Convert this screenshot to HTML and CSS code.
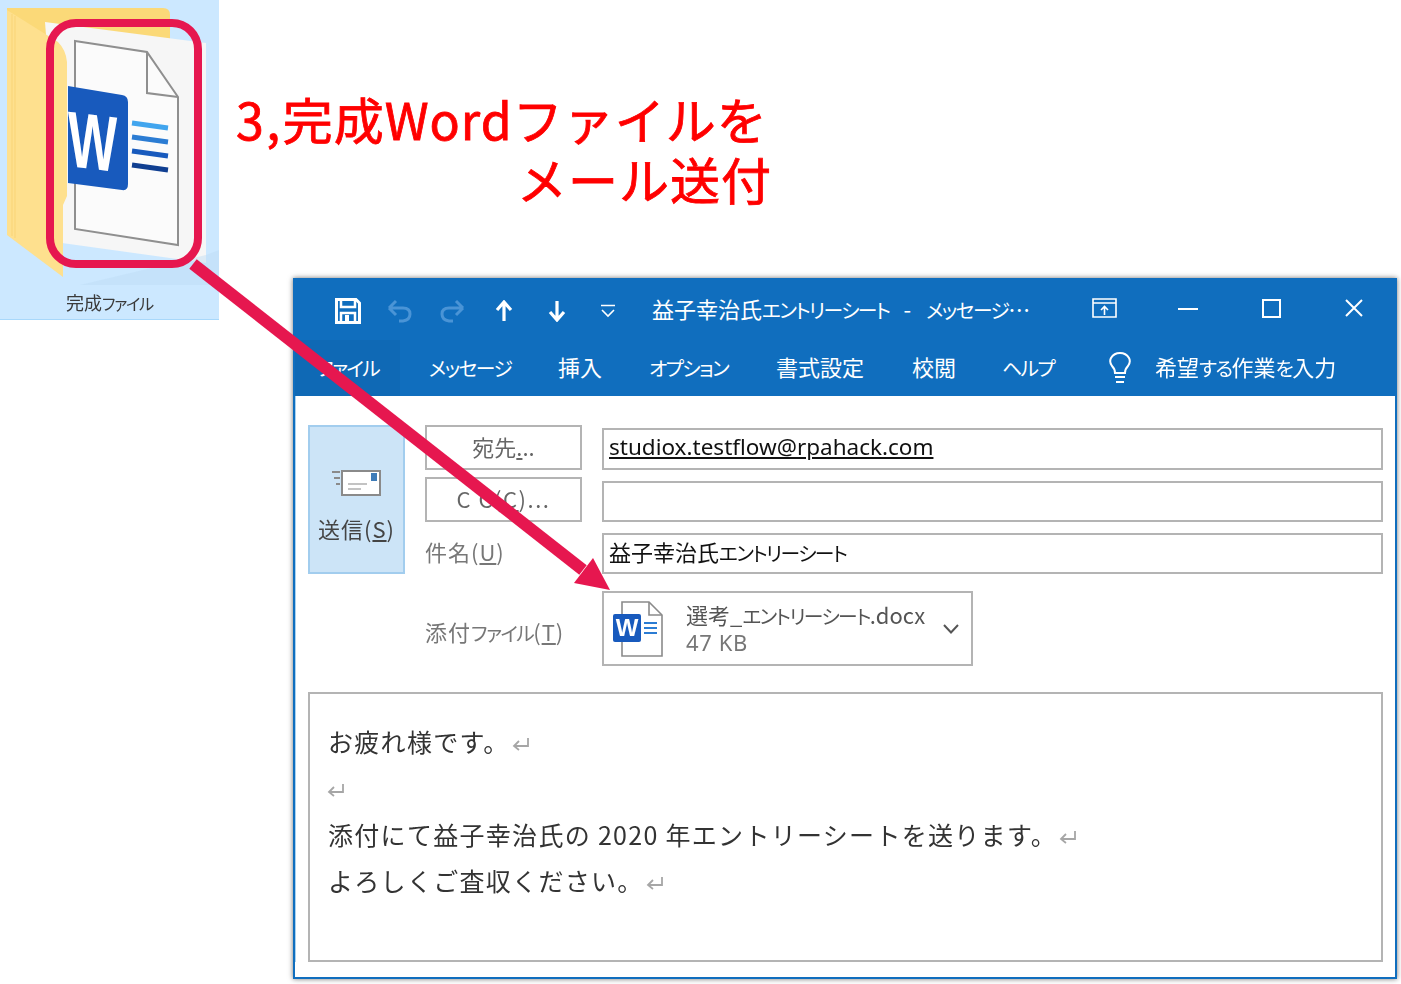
FILE: index.html
```html
<!DOCTYPE html>
<html lang="ja">
<head>
<meta charset="utf-8">
<title>完成Wordファイルをメール送付</title>
<link rel="stylesheet" href="styles.css">
</head>
<body>
<div class="page">
  <section class="tile">
    <svg class="folder" width="219" height="286" viewBox="0 0 219 286">
      <path d="M7 8H163q7 0 7 7V120H7z" fill="#fbd978"/>
      <path d="M45 22L206 43V263L62 243z" fill="#f6f6f6"/>
      <path d="M206 255L219 250V285H80z" fill="#bcdcf4" opacity=".45"/>
      <path d="M7 10L58 42Q66 50 67 62V196L63 205V277L7 235z" fill="#fee08e"/>
      <path d="M12 14V236M15 16V238" stroke="#f9d477" stroke-width="1" fill="none"/>
      <path d="M75 41L147 52L178 97V245L75 229z" fill="#fbfbfb" stroke="#8f8f8f" stroke-width="2"/>
      <path d="M147 52V93L178 97" fill="none" stroke="#8f8f8f" stroke-width="2"/>
      <path d="M68 86L122 95Q128 96 128 102V184Q128 191 122 190L68 183z" fill="#185abd"/>
      <text class="word-w" transform="translate(68 166) skewY(7) scale(.66 1)">W</text>
      <path d="M132 123L168 128" stroke="#41a5ee" stroke-width="5"/>
      <path d="M132 137L168 142" stroke="#2b7cd3" stroke-width="5"/>
      <path d="M132 151L168 156" stroke="#185abd" stroke-width="5"/>
      <path d="M132 165L168 170" stroke="#103f91" stroke-width="5"/>
    </svg>
    <div class="tile-label">完成<span class="k">ファイル</span></div>
  </section>

  <h1 class="headline"><span class="headline-num">3,</span>完成Wordファイルを<span class="headline-second">メール送付</span></h1>

  <main class="window">
    <header class="chrome">
      <div class="titlebar">
        <div class="qat">
          <svg class="ico save" width="26" height="26" viewBox="0 0 26 26"><path d="M1.500 1.500H21L24.500 5V24.500H1.500z" fill="none" stroke="#fff" stroke-width="3"/><path d="M6 2V9H20V2" fill="none" stroke="#fff" stroke-width="2.500"/><path d="M6 24V15H20V24" fill="none" stroke="#fff" stroke-width="2.500"/><rect x="10" y="17" width="4" height="6" fill="#fff"/></svg>
          <svg class="ico undo" width="26" height="24" viewBox="0 0 26 24"><path d="M3 9H17Q24 9 24 15T17 22H13M3 9L10 2M3 9L10 16" fill="none" stroke="#4a94d6" stroke-width="3"/></svg>
          <svg class="ico redo" width="26" height="24" viewBox="0 0 26 24"><path d="M23 9H9Q2 9 2 15T9 22H13M23 9L16 2M23 9L16 16" fill="none" stroke="#4a94d6" stroke-width="3"/></svg>
          <svg class="ico up" width="18" height="22" viewBox="0 0 18 22"><path d="M9 21V3M2 10L9 2L16 10" fill="none" stroke="#fff" stroke-width="3.200"/></svg>
          <svg class="ico down" width="18" height="22" viewBox="0 0 18 22"><path d="M9 1V19M2 12L9 20L16 12" fill="none" stroke="#fff" stroke-width="3.200"/></svg>
          <svg class="ico more" width="16" height="14" viewBox="0 0 16 14"><path d="M1 1.500H15M2 6L8 12L14 6" fill="none" stroke="#fff" stroke-width="1.600"/></svg>
        </div>
        <div class="doc-title">益子幸治氏<span class="k">エントリーシート</span><span class="dash">-</span><span class="k">メッセージ</span>…</div>
        <div class="winctl">
          <svg class="ctl-restore" width="25" height="20" viewBox="0 0 25 20"><path d="M1 1H24V19H1zM1 5H24" fill="none" stroke="#fff" stroke-width="1.600"/><path d="M12.500 17V9M9 12L12.500 8.500L16 12" fill="none" stroke="#fff" stroke-width="1.600"/></svg>
          <svg class="ctl-min" width="20" height="20" viewBox="0 0 20 20"><path d="M0 11H20" stroke="#fff" stroke-width="2"/></svg>
          <svg class="ctl-max" width="19" height="19" viewBox="0 0 19 19"><rect x="1" y="1" width="17" height="17" fill="none" stroke="#fff" stroke-width="2"/></svg>
          <svg class="ctl-close" width="20" height="20" viewBox="0 0 20 20"><path d="M2 2L18 18M18 2L2 18" stroke="#fff" stroke-width="2"/></svg>
        </div>
      </div>
      <nav class="tabs">
        <span class="tab tab-file"><span class="k">ファイル</span></span>
        <span class="tab t-msg"><span class="k">メッセージ</span></span>
        <span class="tab t-ins">挿入</span>
        <span class="tab t-opt"><span class="k">オプション</span></span>
        <span class="tab t-fmt">書式設定</span>
        <span class="tab t-rev">校閲</span>
        <span class="tab t-help"><span class="k">ヘルプ</span></span>
        <svg class="bulb" width="24" height="32" viewBox="0 0 24 32"><path d="M7 21Q7 17 4 14Q1 10 3 6Q6 1 12 1T21 6Q23 10 20 14Q17 17 17 21z" fill="none" stroke="#fff" stroke-width="2"/><path d="M7 25H17M8 30H16" stroke="#fff" stroke-width="2"/></svg>
        <span class="tab t-tell">希望<span class="k">する</span>作業<span class="k">を</span>入力</span>
      </nav>
    </header>

    <div class="compose">
      <div class="send">
        <svg class="send-ico" width="50" height="28" viewBox="0 0 50 28"><path d="M11 2H49V26H11z" fill="#fff" stroke="#8a8a8a" stroke-width="2"/><rect x="40" y="4" width="6" height="8" fill="#3f7cb8"/><path d="M17 15H36M17 20H30" stroke="#b0b0b0" stroke-width="1.500"/><path d="M1 3H9M3 9H9M5 15H9" stroke="#8a8a8a" stroke-width="2"/></svg>
        <span class="send-text">送信(<u>S</u>)</span>
      </div>
      <button class="btn row1">宛先<u>.</u>..</button>
      <div class="field field1 link"><u>studiox.testflow@rpahack.com</u></div>
      <button class="btn row2">C C(<u>C</u>)...</button>
      <div class="field field2"></div>
      <div class="label row3">件名(<u>U</u>)</div>
      <div class="field field3">益子幸治氏<span class="k">エントリーシート</span></div>
      <div class="label row4">添付<span class="k">ファイル</span>(<u>T</u>)</div>
      <div class="attach">
        <svg class="attach-ico" width="50" height="56" viewBox="0 0 50 56"><path d="M9 1H36L49 14V55H9z" fill="#fff" stroke="#8a8a8a" stroke-width="1.600"/><path d="M36 1V14H49" fill="none" stroke="#8a8a8a" stroke-width="1.600"/><rect x="0" y="13" width="28" height="28" rx="2" fill="#185abd"/><text class="attach-w" x="14" y="35">W</text><path d="M31 22H44M31 27H44M31 32H44" stroke="#2b7cd3" stroke-width="2"/></svg>
        <div class="attach-text">
          <div class="attach-name">選考_<span class="k">エントリーシート</span>.docx</div>
          <div class="attach-size">47 KB</div>
        </div>
        <svg class="chev" width="16" height="10" viewBox="0 0 16 10"><path d="M1 1L8 8.500L15 1" fill="none" stroke="#555" stroke-width="2"/></svg>
      </div>
      <article class="body">
        <p>お疲れ様です。<svg class="ret" width="18" height="14" viewBox="0 0 18 14"><path d="M16 1V9H2M7 4L2 9L7 13" fill="none" stroke="#a6a6a6" stroke-width="1.800"/></svg></p>
        <p class="l2"><svg class="ret" width="18" height="14" viewBox="0 0 18 14"><path d="M16 1V9H2M7 4L2 9L7 13" fill="none" stroke="#a6a6a6" stroke-width="1.800"/></svg></p>
        <p>添付にて益子幸治氏の 2020 年エントリーシートを送ります。<svg class="ret" width="18" height="14" viewBox="0 0 18 14"><path d="M16 1V9H2M7 4L2 9L7 13" fill="none" stroke="#a6a6a6" stroke-width="1.800"/></svg></p>
        <p>よろしくご査収ください。<svg class="ret" width="18" height="14" viewBox="0 0 18 14"><path d="M16 1V9H2M7 4L2 9L7 13" fill="none" stroke="#a6a6a6" stroke-width="1.800"/></svg></p>
      </article>
    </div>
  </main>

  <svg class="overlay" width="1401" height="984" viewBox="0 0 1401 984">
    <rect x="50" y="23" width="148" height="241" rx="26" fill="none" stroke="#e6174f" stroke-width="8"/>
    <path d="M193 264L583 570" stroke="#e6174f" stroke-width="12" fill="none"/>
    <path d="M610 590L574 583L593 558z" fill="#e6174f"/>
  </svg>
</div>
</body>
</html>
```
FILE: styles.css
```css
* { box-sizing: border-box; }
html, body { margin: 0; padding: 0; background: #fff; }
body { font-family: "Noto Sans CJK JP", "Noto Sans", sans-serif; overflow: hidden; }

.page {
  position: relative;
  width: 1401px;
  height: 984px;
  overflow: hidden;
  display: grid;
  grid-template-columns: 219px 1fr;
  grid-template-rows: 278px 1fr;
}
.k { font-feature-settings: "palt"; font-size: .9em; letter-spacing: -.08em; }

/* Folder tile */
.tile {
  grid-row: 1 / 3;
  align-self: start;
  height: 320px;
  background: #cce8ff;
  border-bottom: 1px solid #a8d8fb;
  filter: blur(.5px);
}
.folder { display: block; }
.word-w { font-family: "Liberation Sans", sans-serif; font-weight: 700; font-size: 79px; fill: #fff; }
.tile-label { font-size: 18px; line-height: 24px; color: #3a3a3a; text-align: center; margin-top: 4px; }

/* Headline */
.headline {
  margin: 0;
  padding: 88px 0 0 17px;
  font-size: 50px;
  line-height: 60px;
  font-weight: 400;
  letter-spacing: 1px;
  color: #ff0000;
  white-space: nowrap;
  -webkit-text-stroke: .8px #ff0000;
}
.headline-num { letter-spacing: 2.500px; }
.headline-second { display: block; margin-left: 281px; }

/* Mail window */
.window {
  width: 1104px;
  height: 701px;
  margin-left: 74px;
  background: #fff;
  border: 2px solid #106ebe;
  box-shadow: 0 0 5px rgba(0,0,0,.55);
  filter: blur(.4px);
}
.chrome { height: 116px; background: #106ebe; color: #fff; }
.titlebar { height: 60px; display: flex; align-items: center; }
.qat { display: flex; align-items: center; width: 357px; padding-left: 40px; flex: none; margin-top: 2px; }
.save { margin-right: 25px; }
.undo { margin-right: 28px; }
.redo { margin-right: 29px; }
.up { margin-right: 35px; }
.down { margin-right: 34px; }
.doc-title { font-size: 22px; line-height: 30px; white-space: nowrap; width: 440px; flex: none; margin-top: -2px; }
.dash { margin: 0 15px 0 14px; }
.winctl { display: flex; align-items: center; margin-top: -4px; }
.ctl-min { margin-left: 61px; }
.ctl-max { margin-left: 64px; }
.ctl-close { margin-left: 63px; }

.tabs { height: 56px; display: flex; align-items: center; font-size: 22px; }
.tab { white-space: nowrap; line-height: 52px; height: 56px; flex: none; }
.tab-file { width: 105px; padding-left: 22px; background: #0f69b5; }
.t-msg { margin-left: 29px; width: 129px; }
.t-ins { width: 91px; }
.t-opt { width: 127px; }
.t-fmt { width: 136px; }
.t-rev { width: 90px; }
.t-help { width: 106px; }
.bulb { flex: none; }
.t-tell { margin-left: 23px; }

/* Compose form */
.compose {
  display: grid;
  grid-template-columns: 117px 177px 781px;
  grid-template-rows: 45px 45px 45px 85px 289px;
  row-gap: 7px;
  padding: 29px 0 0 12px;
  border-left: 1px solid #a9d2f0;
}
.send {
  grid-column: 1;
  grid-row: 1 / 4;
  width: 97px;
  background: #cce4f7;
  border: 2px solid #a2cdee;
  display: flex;
  flex-direction: column;
  align-items: center;
  padding-top: 42px;
  font-size: 22px;
  color: #444;
  line-height: 30px;
  gap: 16px;
}
.send-ico { margin-left: -2px; }
.send-text { letter-spacing: 1px; }
.btn {
  display: block;
  width: 157px;
  height: 45px;
  padding: 0 0 4px;
  background: #fff;
  border: 2px solid #b4b4b4;
  font: inherit;
  font-size: 22px;
  color: #666;
  text-align: center;
}
.btn.row1 { grid-column: 2; grid-row: 1; }
.btn.row2 { grid-column: 2; grid-row: 2; letter-spacing: 1.500px; }
.field {
  grid-column: 3;
  border: 2px solid #b4b4b4;
  background: #fff;
  padding-left: 5px;
  font-size: 22px;
  line-height: 32px;
  color: #111;
  white-space: nowrap;
}
.field1 { grid-row: 1; margin-top: 3px; }
.field2 { grid-row: 2; margin-top: 4px; }
.field3 { grid-row: 3; margin-top: 4px; }
.link { font-family: "Noto Sans", sans-serif; font-size: 22.500px; line-height: 34px; }
.label { grid-column: 2; font-size: 22px; color: #777; line-height: 30px; white-space: nowrap; letter-spacing: 1px; }
.label.row3 { grid-row: 3; align-self: end; margin-bottom: 8px; }
.label.row4 { grid-row: 4; margin-top: 35px; }
.label .k { letter-spacing: -.08em; }
.attach {
  grid-column: 3;
  grid-row: 4;
  width: 371px;
  height: 75px;
  margin-top: 10px;
  border: 2px solid #b4b4b4;
  display: flex;
  align-items: center;
  padding: 0 12px 0 9px;
}
.attach-ico { flex: none; }
.attach-w { font-family: "Liberation Sans", sans-serif; font-weight: 700; font-size: 24px; fill: #fff; text-anchor: middle; }
.attach-text { margin-left: 23px; flex: none; }
.attach-name { font-size: 22px; line-height: 27px; color: #555; white-space: nowrap; }
.attach-size { font-size: 22px; line-height: 27px; letter-spacing: .6px; color: #777; font-family: "Noto Sans", sans-serif; }
.chev { flex: none; margin-left: auto; }

.body {
  grid-column: 1 / 4;
  grid-row: 5;
  width: 1075px;
  height: 270px;
  margin-top: 19px;
  border: 2px solid #b4b4b4;
  padding: 24px 0 0 18px;
  font-size: 25px;
  letter-spacing: 1.300px;
  color: #333;
}
.body p { margin: 0; height: 46.300px; line-height: 46px; white-space: nowrap; }
.ret { margin-left: 2px; vertical-align: 1px; }
.l2 .ret { margin-left: -1px; }

.overlay { position: absolute; left: 0; top: 0; pointer-events: none; }
```
